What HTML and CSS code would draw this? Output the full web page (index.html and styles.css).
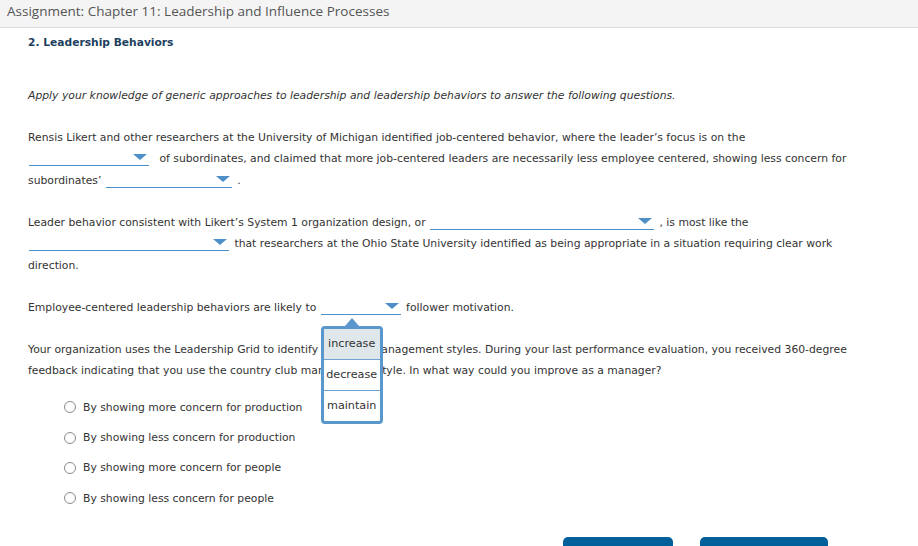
FILE: index.html
```html
<!DOCTYPE html>
<html lang="en">
<head>
<meta charset="utf-8">
<title>Assignment: Chapter 11</title>
<link rel="stylesheet" href="styles.css">
</head>
<body>
<header class="header">
  <h1 class="title">Assignment: Chapter 11: Leadership and Influence Processes</h1>
</header>
<main class="content">
  <h2 class="q-title">2. Leadership Behaviors</h2>
  <p class="instructions">Apply your knowledge of generic approaches to leadership and leadership behaviors to answer the following questions.</p>

  <p class="para">Rensis Likert and other researchers at the University of Michigan identified job-centered behavior, where the leader’s focus is on the <span class="select w120 gap-after"></span> of subordinates, and claimed that more job-centered leaders are necessarily less employee centered, showing less concern for subordinates’ <span class="select w126"></span> .</p>

  <p class="para">Leader behavior consistent with Likert’s System 1 organization design, or <span class="select w224"></span> , is most like the <span class="select w200"></span> that researchers at the Ohio State University identified as being appropriate in a situation requiring clear work direction.</p>

  <p class="para">Employee-centered leadership behaviors are likely to <span class="select w80 open"><span class="menu"><span class="option active">increase</span><span class="option">decrease</span><span class="option">maintain</span></span></span> follower motivation.</p>

  <p class="para">Your organization uses the Leadership Grid to identify different management styles. During your last performance evaluation, you received 360-degree feedback indicating that you use the country club management style. In what way could you improve as a manager?</p>

  <ul class="choices">
    <li class="choice"><span class="radio"></span>By showing more concern for production</li>
    <li class="choice"><span class="radio"></span>By showing less concern for production</li>
    <li class="choice"><span class="radio"></span>By showing more concern for people</li>
    <li class="choice"><span class="radio"></span>By showing less concern for people</li>
  </ul>

  <div class="footer">
    <button class="btn btn-a" aria-label="Check My Work"></button>
    <button class="btn btn-b" aria-label="Save and Continue"></button>
  </div>
</main>
</body>
</html>
```

FILE: styles.css
```css
html, body {
  margin: 0;
  height: 100%;
  overflow: hidden;
}
body {
  font-family: "DejaVu Sans", Verdana, sans-serif;
  font-size: 10.8px;
  color: #333;
  background: #fff;
}
.header {
  background: #f4f4f4;
  border-bottom: 1px solid #dcdcdc;
  padding: 1px 0 0 7px;
  box-sizing: border-box;
  height: 28px;
}
.title {
  margin: 0;
  font-family: "Open Sans", sans-serif;
  font-weight: 400;
  font-size: 13.5px;
  line-height: 20px;
  color: #555;
}
.content {
  padding: 7px 0 0 28px;
  width: 828px;
}
.q-title {
  margin: 0;
  font-size: 10.7px;
  font-weight: bold;
  line-height: 16px;
  color: #1d3f5e;
}
.instructions {
  margin: 34px 0 0;
  font-style: italic;
  line-height: 21.5px;
}
.para {
  margin: 20px 0 0;
  line-height: 21.5px;
}
.para + .para {
  margin-top: 20.5px;
}
.select {
  display: inline-block;
  position: relative;
  height: 15px;
  margin: 0 2px 0 1px;
  border-bottom: 1px solid #4f8fc7;
  vertical-align: -4px;
}
.select::after {
  content: "";
  position: absolute;
  right: 2px;
  bottom: 5px;
  border-left: 7px solid transparent;
  border-right: 7px solid transparent;
  border-top: 6px solid #4f8fc7;
}
.gap-after { margin-right: 7px; }
.w80 { width: 80px; }
.w120 { width: 120px; }
.w126 { width: 126px; }
.w200 { width: 200px; }
.w224 { width: 224px; }

.menu {
  position: absolute;
  left: 0;
  top: 27px;
  width: 56px;
  display: flex;
  flex-direction: column;
  background: #fff;
  border: 3px solid #5a97cd;
  border-radius: 4px;
  z-index: 2;
}
.menu::before {
  content: "";
  position: absolute;
  left: 21px;
  top: -11px;
  border-left: 7px solid transparent;
  border-right: 7px solid transparent;
  border-bottom: 8px solid #5a97cd;
}
.option {
  height: 30px;
  line-height: 30px;
  text-align: center;
  font-size: 11.2px;
  color: #333;
  white-space: nowrap;
}
.option + .option {
  border-top: 1px solid #6fa3d3;
}
.option.active {
  background: #dfe7eb;
}

.choices {
  list-style: none;
  margin: 10.75px 0 0;
  padding: 0 0 0 36px;
}
.choice {
  display: flex;
  align-items: center;
  gap: 7px;
  height: 30.3px;
}
.radio {
  width: 10px;
  height: 10px;
  border: 1px solid #8a8a8a;
  border-radius: 50%;
  background: #fff;
}
.footer {
  display: flex;
  justify-content: flex-end;
  gap: 27px;
  margin-top: 24px;
  padding-right: 28px;
}
.btn {
  height: 30px;
  border: 0;
  border-radius: 5px;
  background: #00609a;
  padding: 0;
}
.btn-a { width: 110px; }
.btn-b { width: 128px; }
```
